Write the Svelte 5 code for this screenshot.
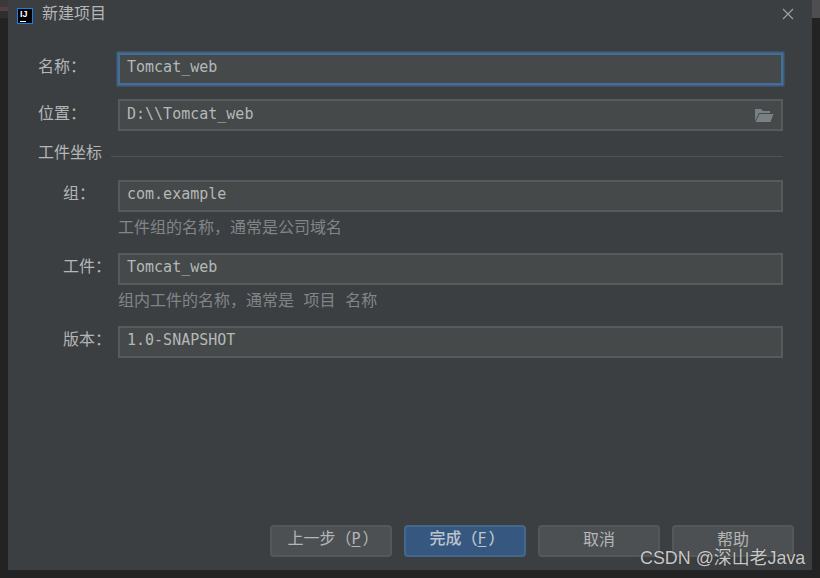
<script lang="ts">
	const groupFields = [
		{ label: '组：', value: 'com.example', hint: '工件组的名称，通常是公司域名' },
		{ label: '工件：', value: 'Tomcat_web', hint: '组内工件的名称，通常是 项目 名称' },
		{ label: '版本：', value: '1.0-SNAPSHOT', hint: '' }
	];
</script>

<div class="window">
	<div class="edge-left"></div>
	<div class="edge-right"></div>
	<div class="dialog">
		<header class="titlebar">
			<span class="logo"><span class="logo-text">IJ</span><span class="logo-bar"></span></span>
			<span class="title">新建项目</span>
			<svg class="close" width="12" height="12" viewBox="0 0 12 12" aria-hidden="true">
				<path d="M1 1l10 10M11 1L1 11" stroke="#a0a2a3" stroke-width="1.1" fill="none" />
			</svg>
		</header>

		<div class="form">
			<div class="row">
				<span class="label">名称：</span>
				<div class="field focused"><input readonly value="Tomcat_web" /></div>
			</div>
			<div class="row location">
				<span class="label">位置：</span>
				<div class="field">
					<input readonly value="D:\\Tomcat_web" />
					<svg class="folder" width="20" height="16" viewBox="0 0 20 16" aria-hidden="true">
						<path d="M1 2h6l2 2h7v2H5L1 14z" fill="#7a8184" />
						<path d="M5.500 7H19.500L16.500 15H1.500z" fill="#7a8184" />
					</svg>
				</div>
			</div>

			<div class="section">
				<span>工件坐标</span>
				<div class="rule"></div>
			</div>

			<div class="group">
				{#each groupFields as f}
					<div class="row">
						<span class="label">{f.label}</span>
						<div class="field"><input readonly value={f.value} /></div>
					</div>
					{#if f.hint}
						<div class="hint">{f.hint}</div>
					{/if}
				{/each}
			</div>
		</div>

		<footer class="buttons">
			<button class="mnemonic">上一步（<u>P</u>）</button>
			<button class="primary mnemonic">完成（<u>F</u>）</button>
			<button>取消</button>
			<button>帮助</button>
		</footer>
	</div>
	<div class="watermark">CSDN @深山老Java</div>
</div>

<style>
	:global(body) {
		margin: 0;
		background: #232323;
	}

	.window {
		position: relative;
		width: 820px;
		height: 578px;
		box-sizing: border-box;
		padding: 0 8px 8px;
		background: #232323;
		overflow: hidden;
		font-family: 'Noto Sans CJK SC', 'Liberation Sans', sans-serif;
		font-size: 16px;
		color: #bbbbbb;
	}

	.edge-left {
		position: absolute;
		left: 0;
		top: 0;
		width: 8px;
		height: 18px;
		background: linear-gradient(#3a3a3c 0 7px, #5a3c40 7px 11px, #2e2e2e 11px);
	}

	.edge-right {
		position: absolute;
		right: 0;
		top: 0;
		width: 8px;
		height: 18px;
		background: #4e4e50;
	}

	.dialog {
		display: flex;
		flex-direction: column;
		height: 100%;
		background: #3c3f41;
	}

	.titlebar {
		display: flex;
		align-items: center;
		height: 26px;
		padding: 0 18px 0 9px;
		flex: none;
	}

	.logo {
		position: relative;
		width: 16px;
		height: 16px;
		box-sizing: border-box;
		border: 1px solid #1a7fe0;
		background: #000;
		margin-top: 6px;
		flex: none;
	}

	.logo-text {
		position: absolute;
		left: 2px;
		top: 1px;
		font: bold 9px/9px 'Liberation Sans', sans-serif;
		color: #fff;
	}

	.logo-bar {
		position: absolute;
		left: 2px;
		bottom: 1px;
		width: 6px;
		height: 1px;
		background: #fff;
	}

	.title {
		margin-left: 9px;
		line-height: 22px;
		margin-bottom: 2px;
		color: #b4b6b7;
	}

	.close {
		margin-left: auto;
		margin-top: 2px;
	}

	.form {
		display: flex;
		flex-direction: column;
		padding: 27px 29px 0 30px;
	}

	.row {
		display: flex;
		align-items: center;
		height: 32px;
	}

	.location {
		margin-top: 14px;
	}

	.label {
		width: 80px;
		flex: none;
		margin-bottom: 8px;
		line-height: 24px;
		color: #b4b6b7;
	}

	.location .label {
		margin-bottom: 6px;
	}

	.field {
		position: relative;
		flex: 1;
		height: 32px;
		box-sizing: border-box;
		border: 2px solid #585b5d;
		background: #45494a;
	}

	.focused {
		border-color: #466d94;
		box-shadow: 0 0 0 1.5px #3d6185;
	}

	input {
		display: block;
		width: 100%;
		height: 100%;
		box-sizing: border-box;
		padding: 0 7px 5px;
		border: 0;
		outline: 0;
		background: transparent;
		font-family: 'DejaVu Sans Mono', 'Liberation Mono', monospace;
		font-size: 15px;
		color: #b4b8b8;
	}

	.location input {
		padding-bottom: 3px;
	}

	.folder {
		position: absolute;
		right: 7px;
		top: 6px;
	}

	.section {
		display: flex;
		align-items: center;
		gap: 9px;
		height: 22px;
		margin-top: 11px;
		color: #b4b6b7;
	}

	.section span {
		margin-bottom: 4px;
	}

	.rule {
		flex: 1;
		height: 1px;
		margin-top: 7px;
		background: #515354;
	}

	.group {
		margin-top: 16px;
		padding-left: 25px;
	}

	.group .label {
		width: 55px;
	}

	.hint {
		height: 41px;
		margin-left: 55px;
		line-height: 28px;
		word-spacing: 6px;
		color: #828587;
	}

	.buttons {
		display: flex;
		justify-content: flex-end;
		gap: 12px;
		margin-top: auto;
		padding: 0 18px 13px 0;
	}

	button {
		width: 122px;
		height: 32px;
		box-sizing: border-box;
		padding: 0 0 6px;
		border: 2px solid #55585a;
		border-radius: 4px;
		background: #4c5052;
		font-family: inherit;
		font-size: 16px;
		line-height: 18px;
		color: #b4b6b7;
	}

	button.mnemonic {
		padding-left: 4px;
		padding-right: 0;
	}

	button.primary {
		background: #365880;
		border-color: #43688c;
		color: #bcc4cc;
		font-weight: 500;
	}

	u {
		margin-right: 2px;
		font-family: 'DejaVu Sans Mono', monospace;
		font-size: 15px;
		text-underline-offset: 2px;
	}

	.watermark {
		position: absolute;
		left: 640px;
		top: 546px;
		font-family: 'Liberation Sans', 'Noto Sans CJK SC', sans-serif;
		font-size: 17.9px;
		line-height: 24px;
		color: #c8c8c8;
		text-shadow: 0 0 1px #222;
	}
</style>
